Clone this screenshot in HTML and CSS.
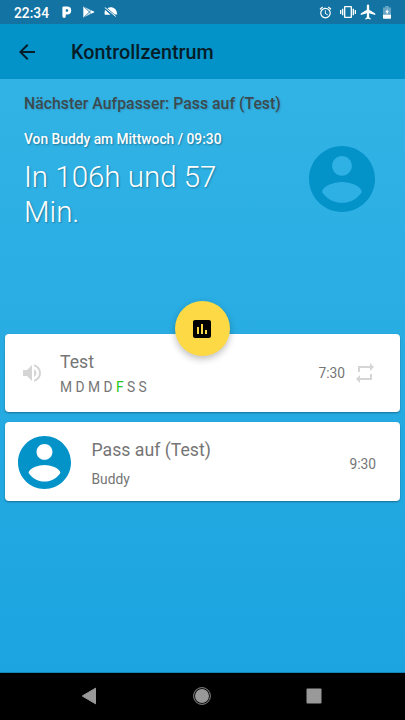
FILE: index.html
```html
<!DOCTYPE html>
<html lang="de">
<head>
<meta charset="utf-8">
<title>Kontrollzentrum</title>
<link rel="stylesheet" href="styles.css">
</head>
<body>
<svg class="defs" width="0" height="0">
  <symbol id="account" viewBox="2 2 20 20"><path d="M12 2C6.480 2 2 6.480 2 12s4.480 10 10 10 10-4.480 10-10S17.520 2 12 2zm0 3c1.660 0 3 1.340 3 3s-1.340 3-3 3-3-1.340-3-3 1.340-3 3-3zm0 14.200c-2.500 0-4.710-1.280-6-3.220.030-1.990 4-3.080 6-3.080 1.990 0 5.970 1.090 6 3.080-1.290 1.940-3.500 3.220-6 3.220z"/></symbol>
</svg>
<div class="screen">
  <div class="status">
    <span class="clock">22:34</span>
    <svg class="s-p" width="10" height="12" viewBox="0 0 10 12"><path fill-rule="evenodd" d="M1.500.5H5.200a4 4 0 0 1 0 8H3.800V10.200A1.700 1.700 0 0 1 .4 10.200V1.600Q.4.500 1.500.5zM3.800 3.200V5.800H5a1.300 1.300 0 0 0 0-2.600z"/></svg>
    <svg class="s-play" width="12" height="12" viewBox="0 0 12 12"><path d="M.5.5L11.500 6 .5 11.500z" opacity=".8"/><path d="M.5.5L6 6 .5 11.500zM8 4.300L11.500 6 8 7.700 6.300 6z"/><path d="M1 .8L8.500 8M1 11.200L8.500 4" stroke="#1374a3" stroke-width=".7"/></svg>
    <svg class="s-off" width="14" height="10" viewBox="0 0 14 10"><path d="M3.500 1.200C7.500-1 13 1.200 13.200 7.500H10.800zM1.200 3L6.500 7.700H.8C.4 6 .5 4.300 1.200 3z"/><path d="M.8.500L11.800 9.500" stroke="#fff" stroke-width="1"/></svg>
    <span class="grow"></span>
    <svg class="s-alarm" width="13" height="13" viewBox="1 1 22 22"><path d="M22 5.720l-4.600-3.860-1.290 1.530 4.600 3.860L22 5.720zM7.880 3.390L6.600 1.860 2 5.710l1.290 1.530 4.590-3.850zM12.500 8H11v6l4.750 2.850.75-1.230-4-2.370V8zM12 4c-4.970 0-9 4.030-9 9s4.020 9 9 9a9 9 0 0 0 0-18zm0 16c-3.870 0-7-3.130-7-7s3.130-7 7-7 7 3.130 7 7-3.130 7-7 7z"/></svg>
    <svg class="s-vib" width="16" height="16" viewBox="0 0 24 24"><path d="M0 15h2V9H0v6zm3 2h2V7H3v10zm19-8v6h2V9h-2zm-3 8h2V7h-2v10zM16.500 3h-9C6.670 3 6 3.670 6 4.500v15c0 .83.67 1.500 1.500 1.500h9c.83 0 1.500-.67 1.500-1.500v-15c0-.83-.67-1.500-1.500-1.500zM16 19H8V5h8v14z"/></svg>
    <svg class="s-plane" width="16" height="16" viewBox="1.500 1.500 21 21"><path d="M21.500 16v-2l-8-5V3.500a1.500 1.500 0 0 0-3 0V9l-8 5v2l8-2.500V19l-2 1.500V22l3.500-1 3.500 1v-1.500L13.500 19v-5.500z"/></svg>
    <svg class="s-bat" width="8" height="13" viewBox="0 0 8 13"><path d="M0 1.500h2.200V0h3.600v1.500H8V9H0z" opacity=".35"/><path d="M0 8.800h8V12q0 .7-.7.700H.7Q0 12.700 0 12z"/><path d="M4.600 3L2.300 6.200h1.400V8.500L6 5.300H4.600z"/></svg>
  </div>
  <header class="bar">
    <svg class="back" width="24" height="24" viewBox="0 0 24 24"><path d="M20 11H7.830l5.590-5.590L12 4l-8 8 8 8 1.410-1.410L7.830 13H20v-2z"/></svg>
    <h1>Kontrollzentrum</h1>
  </header>
  <main>
    <section class="hero">
      <div class="next">Nächster Aufpasser: Pass auf (Test)</div>
      <div class="row">
        <div class="info">
          <div class="from">Von Buddy am Mittwoch / 09:30</div>
          <div class="count">In 106h und 57<br>Min.</div>
        </div>
        <svg class="avatar big" width="66" height="66"><use href="#account"/></svg>
      </div>
      <button class="fab" aria-label="Statistik"><svg width="24" height="24" viewBox="0 0 24 24"><path d="M19 3H5c-1.100 0-2 .9-2 2v14c0 1.100.9 2 2 2h14c1.100 0 2-.9 2-2V5c0-1.100-.9-2-2-2zM9 17H7v-7h2v7zm4 0h-2V7h2v10zm4 0h-2v-4h2v4z"/></svg></button>
    </section>
    <article class="card">
      <svg class="vol" width="24" height="24" viewBox="0 0 24 24"><path d="M3 9v6h4l5 5V4L7 9H3zm13.500 3A4.500 4.500 0 0 0 14 7.970v8.050c1.480-.73 2.500-2.250 2.500-4.020zM14 3.230v2.060c2.890.86 5 3.540 5 6.710s-2.110 5.850-5 6.710v2.060c4.010-.91 7-4.490 7-8.770s-2.990-7.860-7-8.770z"/></svg>
      <div class="text">
        <div class="name">Test</div>
        <div class="days">M D M D <b>F</b> S S</div>
      </div>
      <div class="time">7:30</div>
      <svg class="repeat" width="24" height="24" viewBox="0 0 24 24"><path d="M7 7h10v3l4-4-4-4v3H5v6h2V7zm10 10H7v-3l-4 4 4 4v-3h12v-6h-2v4z"/></svg>
    </article>
    <article class="card second">
      <svg class="avatar" width="53" height="53"><use href="#account"/></svg>
      <div class="text">
        <div class="name">Pass auf (Test)</div>
        <div class="sub">Buddy</div>
      </div>
      <div class="time">9:30</div>
    </article>
  </main>
  <nav class="nav">
    <svg width="18" height="18" viewBox="0 0 18 18"><path d="M2.300 9L15.500 1.200v15.600z" stroke="#999" stroke-linejoin="round"/></svg>
    <svg width="18" height="18" viewBox="0 0 18 18"><circle cx="9" cy="9" r="7"/><circle cx="9" cy="9" r="8.400" fill="none" stroke="#999" stroke-width=".9"/></svg>
    <svg width="18" height="18" viewBox="0 0 18 18"><rect x="1.500" y="1.500" width="15" height="15" rx="1"/></svg>
  </nav>
</div>
</body>
</html>
```
FILE: styles.css
```css
* { box-sizing: border-box; }
body { margin: 0; font-family: Roboto, sans-serif; }
svg { display: block; flex: none; }
.defs { position: absolute; }
.screen { width: 405px; height: 720px; display: flex; flex-direction: column; overflow: hidden; }
.status { height: 24px; flex: none; background: #1374a3; display: flex; align-items: center; padding: 0 14px; color: #fff; fill: #fff; }
.clock { font-size: 13.800px; font-weight: 500; width: 48px; line-height: 24px; padding-top: 1px; }
.s-play { margin-left: 11px; }
.s-off { margin-left: 9px; }
.grow { flex: 1; }
.s-vib { margin-left: 8px; }
.s-plane { margin-left: 4px; }
.s-bat { margin-left: 7px; }
.bar { height: 55px; flex: none; background: #0493c9; display: flex; align-items: center; padding-left: 15px; }
.bar h1 { margin: 2px 0 0 32px; font-size: 19.700px; font-weight: 500; letter-spacing: .08px; color: #051d28; line-height: 24px; }
.back { fill: #051d28; }
main { flex: 1; background: linear-gradient(#32b3e5, #1ba4e0); padding: 0 5px; border-bottom: 1px solid #1485b8; }
.hero { position: relative; height: 254.500px; padding: 15px 25px 0 19px; }
.next { font-size: 15.750px; font-weight: 500; letter-spacing: .05px; line-height: 20px; color: #3c4a50; text-shadow: 1px 1px 2px rgba(0,0,0,.15); }
.row { display: flex; justify-content: space-between; margin-top: 16px; }
.from { font-size: 13.800px; font-weight: 500; line-height: 18px; color: #fff; text-shadow: 1px 1px 2px rgba(0,0,0,.35); }
.count { margin-top: 12px; font-size: 29.500px; font-weight: 300; line-height: 34.600px; color: #fff; text-shadow: 1px 1px 2px rgba(0,0,0,.3); }
.avatar { fill: #0493c9; }
.big { margin-top: 16px; }
.fab { position: absolute; left: 169.500px; top: 222px; width: 55px; height: 55px; border: 0; border-radius: 50%; background: #fdd946; box-shadow: 0 3px 7px rgba(0,0,0,.25); display: grid; place-items: center; padding: 0; z-index: 1; }
.card { height: 78.500px; background: #fff; border-radius: 4px; box-shadow: 0 1px 2px rgba(0,0,0,.35); display: flex; align-items: center; padding: 0 23px 0 15px; color: #757575; }
.second { margin-top: 10px; padding: 2px 24px 0 13px; }
.text { flex: 1; margin: 2px 0 0 16px; }
.second .text { margin: 2px 0 0 20.500px; }
.second .time { margin-top: 3px; }
.name { font-size: 17.700px; line-height: 22px; }
.days, .sub, .time { font-size: 13.800px; line-height: 18px; }
.days { margin-top: 5px; }
.days b { font-weight: 400; color: #20c820; }
.sub { margin-top: 9px; }
.vol, .repeat { fill: #d5d5d5; }
.repeat { margin-left: 8px; }
.nav { height: 47px; flex: none; background: #000; display: flex; justify-content: space-between; align-items: center; padding: 0 82px 1px 80px; fill: #999; }
```
